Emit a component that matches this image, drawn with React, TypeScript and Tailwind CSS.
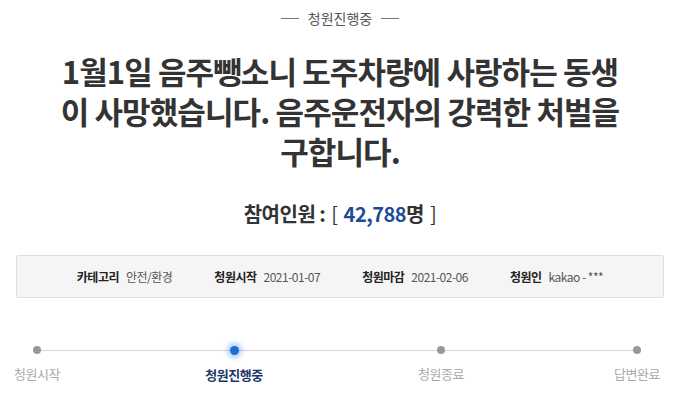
import React from 'react';

const font = { fontFamily: '"Noto Sans CJK KR", "Noto Sans", sans-serif' };

const steps = [
    { label: '청원시작', active: false, gap: 'ml-[7px]' },
    { label: '청원진행중', active: true, gap: 'ml-[137px]' },
    { label: '청원종료', active: false, gap: 'ml-[147px]' },
    { label: '답변완료', active: false, gap: 'ml-[136px]' },
];

const meta = [
    { k: '카테고리', v: '안전/환경' },
    { k: '청원시작', v: '2021-01-07' },
    { k: '청원마감', v: '2021-02-06' },
    { k: '청원인', v: 'kakao - ***' },
];

export default function App() {
    return (
        <div className="w-[680px] h-[408px] bg-white overflow-hidden text-[#333]" style={font}>
            {/* status label */}
            <div className="flex items-center justify-center gap-[9px] pt-[8px] h-[28px]">
                <span className="w-[18px] h-px bg-[#777]" />
                <span className="text-[14px] text-[#555] leading-none">청원진행중</span>
                <span className="w-[18px] h-px bg-[#777]" />
            </div>

            {/* title */}
            <h1 className="mt-[23px] text-center text-[31px] font-bold leading-[40px] tracking-[-0.9px] text-[#333]">
                1월1일 음주뺑소니 도주차량에 사랑하는 동생<br />
                이 사망했습니다. 음주운전자의 강력한 처벌을<br />
                구합니다.
            </h1>

            {/* count */}
            <div className="mt-[32px] flex justify-center items-center text-[20px] font-bold tracking-[-0.5px] leading-none h-[21px]">
                <span>참여인원 :</span>
                <span className="font-normal ml-[6px]">[</span>
                <span className="ml-[6px] text-[#1e4b95]">42,788</span>
                <span>명</span>
                <span className="font-normal ml-[6px]">]</span>
            </div>

            {/* meta box */}
            <div className="mt-[31px] mx-[16px] h-[43px] bg-[#f5f5f5] border border-[#dedede] rounded-[2px] flex items-center justify-center gap-[42px] text-[12px] tracking-[-0.5px]">
                {meta.map((m, i) => (
                    <div key={i} className="flex items-center">
                        <span className="font-bold text-[#222]">{m.k}</span>
                        <span className="ml-[7px] text-[#555]">{m.v}</span>
                    </div>
                ))}
            </div>

            {/* progress */}
            <div className="mt-[47px] relative">
                <div className="absolute left-[37px] right-[43px] top-[5px] h-px bg-[#d4d4d4]" />
                <div className="relative flex">
                    {steps.map((s, i) => (
                        <div key={i} className={`${s.gap} w-[60px] flex flex-col items-center`}>
                            {s.active ? (
                                <span className="w-[9px] h-[9px] mt-[1px] rounded-full bg-[#1a6fd6] shadow-[0_0_5px_3px_rgba(80,150,240,0.45)]" />
                            ) : (
                                <span className="w-[8px] h-[8px] mt-[1px] rounded-full bg-[#999]" />
                            )}
                            <span
                                className={
                                    s.active
                                        ? 'mt-[10px] whitespace-nowrap text-[13px] font-bold text-[#1c3767] tracking-[-0.5px]'
                                        : 'mt-[10px] whitespace-nowrap text-[13px] text-[#aaa] tracking-[-0.5px]'
                                }
                            >
                                {s.label}
                            </span>
                        </div>
                    ))}
                </div>
            </div>
        </div>
    );
}
